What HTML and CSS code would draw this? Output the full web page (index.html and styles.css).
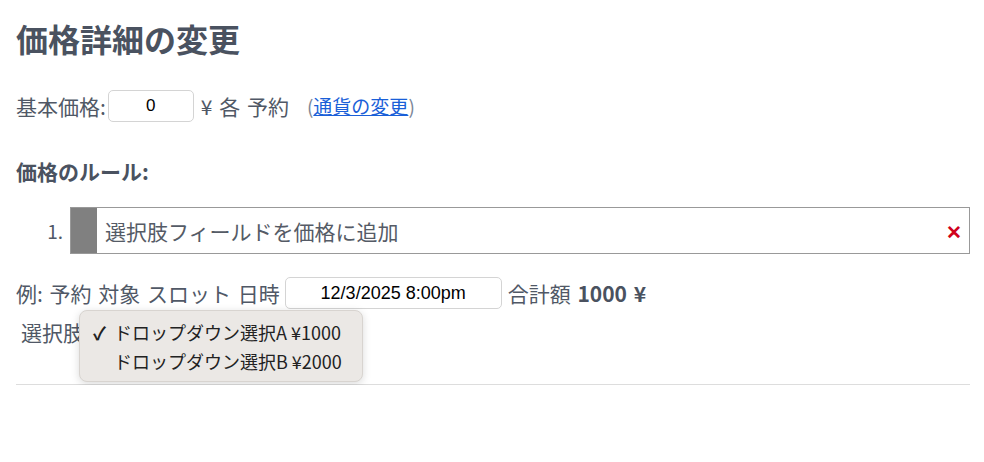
FILE: index.html
```html
<!DOCTYPE html>
<html lang="ja">
<head>
  <meta charset="UTF-8" />
  <meta name="viewport" content="width=device-width, initial-scale=1" />
  <title>価格詳細の変更</title>
  <link rel="stylesheet" href="styles.css">
</head>
<body>

  <div class="page">
    <h1>価格詳細の変更</h1>

    <!-- Precio base -->
    <div class="row base-row">
      <span>基本価格:</span>
      <input type="text" class="price-input" value="0">
      <span>¥ 各 予約</span>
      <span class="currency">(<a href="#">通貨の変更</a>)</span>
    </div>

    <h2>価格のルール:</h2>

    <div class="rule">
      <span class="rule-num">1.</span>
      <div class="rule-box">
        <span class="handle"></span>
        <span class="rule-text">選択肢フィールドを価格に追加</span>
        <span class="remove">✕</span>
      </div>
    </div>

    <!-- Ejemplo -->
    <div class="row example-row">
      <span>例: 予約 対象 スロット 日時</span>
      <input type="text" class="date-input" value="12/3/2025 8:00pm">
      <span>合計額 <strong>1000 ¥</strong></span>
    </div>

    <div class="row choice-row">
      <span class="choice-label">選択肢</span>
      <div class="dropdown">
        <div class="option selected"><span class="check">✓</span>ドロップダウン選択A ¥1000</div>
        <div class="option"><span class="check"></span>ドロップダウン選択B ¥2000</div>
      </div>
    </div>

    <hr>
  </div>

</body>
</html>
```

FILE: styles.css
```css
body {
  margin: 0;
  font-family: "Noto Sans CJK JP", "Noto Sans", sans-serif;
  color: #505866;
  background-color: #fff;
}

.page {
  padding: 0 14px 0 16px;
}

h1 {
  font-size: 32px;
  line-height: 40px;
  font-weight: bold;
  color: #4a5260;
  margin: 18px 0 0 0;
}

h2 {
  font-size: 21px;
  line-height: 28px;
  font-weight: bold;
  color: #4a5260;
  margin: 35px 0 0 0;
}

.row {
  display: flex;
  align-items: center;
  font-size: 21px;
  line-height: 32px;
  word-spacing: 2px;
}

.base-row {
  margin-top: 32px;
}

.price-input {
  width: 86px;
  height: 32px;
  box-sizing: border-box;
  border: 1px solid #d4d4d4;
  border-radius: 5px;
  font-family: "Liberation Sans", Arial, sans-serif;
  font-size: 17px;
  text-align: center;
  color: #000;
  margin: 0 7px 0 2px;
  padding: 0;
}

.currency {
  margin-left: 18px;
  font-size: 19px;
  color: #7a8596;
}

.currency a {
  color: #1a5fd8;
  text-decoration: underline;
}

/* Reglas */
.rule {
  display: flex;
  align-items: center;
  margin-top: 22px;
}

.rule-num {
  width: 54px;
  box-sizing: border-box;
  padding-right: 7px;
  text-align: right;
  font-size: 19px;
  color: #505866;
}

.rule-box {
  flex: 1;
  display: flex;
  align-items: center;
  height: 47px;
  box-sizing: border-box;
  border: 1px solid #999;
  background-color: #fff;
}

.handle {
  width: 26px;
  align-self: stretch;
  background-color: #808080;
}

.rule-text {
  flex: 1;
  padding-left: 8px;
  font-size: 21px;
  color: #555b66;
}

.remove {
  color: #d0021b;
  font-weight: bold;
  font-size: 19px;
  margin-right: 7px;
}

.example-row {
  margin-top: 23px;
}

.date-input {
  width: 217px;
  height: 32px;
  box-sizing: border-box;
  border: 1px solid #d4d4d4;
  border-radius: 5px;
  font-family: "Liberation Sans", Arial, sans-serif;
  font-size: 18px;
  text-align: center;
  color: #000;
  margin: 0 6px 0 5px;
  padding: 0;
}

.example-row strong {
  color: #4a5260;
}

.choice-row {
  position: relative;
  margin-top: 7px;
  height: 32px;
}

.choice-label {
  margin-left: 5px;
}

/* Menú desplegable */
.dropdown {
  position: absolute;
  left: 63px;
  top: -6px;
  width: 284px;
  height: 72px;
  box-sizing: border-box;
  padding: 7px 0;
  background-color: #ebe8e5;
  border: 1px solid #d8d4d0;
  border-radius: 8px;
  box-shadow: 0 2px 8px rgba(0,0,0,0.15);
  font-size: 18px;
  line-height: 29px;
  word-spacing: 0;
  color: #222;
}

.option {
  display: flex;
  align-items: center;
  padding-left: 13px;
}

.check {
  display: inline-block;
  width: 21px;
  font-weight: bold;
}

hr {
  border: none;
  border-top: 1px solid #ddd;
  margin: 36px 0 0 0;
}
```
